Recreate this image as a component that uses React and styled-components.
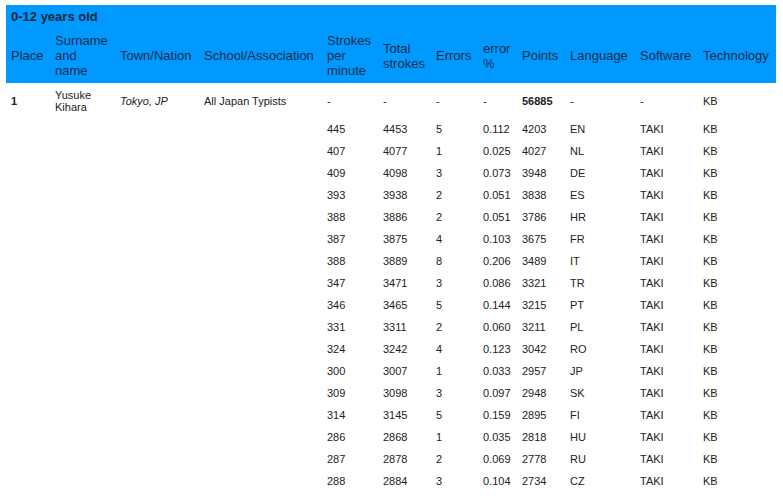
import React from "react";
import styled, { createGlobalStyle } from "styled-components";

const Global = createGlobalStyle`
  body { margin: 0; background: #fff; font-family: "Liberation Sans", Arial, sans-serif; }
`;
const Wrap = styled.div` padding: 5px 0 0 6px; `;
const Table = styled.table`
  width: 770px; border-collapse: collapse; table-layout: fixed;
`;
const Title = styled.th`
  background: #0099ff; color: #0d2740; font-size: 13px; font-weight: bold;
  text-align: left; padding: 4px 5px; line-height: 15px;
`;
const Head = styled.th`
  background: #0099ff; color: #0d2d4a; font-size: 13px; font-weight: normal;
  text-align: left; padding: 5px 5px; line-height: 15px; vertical-align: middle;
`;
const Cell = styled.td`
  font-size: 11px; color: #222; padding: 5px 5px; line-height: 12px;
  vertical-align: middle; font-weight: ${p => (p.$bold ? "bold" : "normal")};
  font-style: ${p => (p.$italic ? "italic" : "normal")};
`;
const FirstRow = styled.tr` td { padding-top: 6px; padding-bottom: 5px; } `;

const widths = [44, 65, 84, 123, 56, 53, 47, 39, 48, 70, 63, 78];
const heads = ["Place", "Surname and name", "Town/Nation", "School/Association", "Strokes per minute", "Total strokes", "Errors", "error %", "Points", "Language", "Software", "Technology"];
const data = [
  [445, 4453, 5, "0.112", 4203, "EN"], [407, 4077, 1, "0.025", 4027, "NL"],
  [409, 4098, 3, "0.073", 3948, "DE"], [393, 3938, 2, "0.051", 3838, "ES"],
  [388, 3886, 2, "0.051", 3786, "HR"], [387, 3875, 4, "0.103", 3675, "FR"],
  [388, 3889, 8, "0.206", 3489, "IT"], [347, 3471, 3, "0.086", 3321, "TR"],
  [346, 3465, 5, "0.144", 3215, "PT"], [331, 3311, 2, "0.060", 3211, "PL"],
  [324, 3242, 4, "0.123", 3042, "RO"], [300, 3007, 1, "0.033", 2957, "JP"],
  [309, 3098, 3, "0.097", 2948, "SK"], [314, 3145, 5, "0.159", 2895, "FI"],
  [286, 2868, 1, "0.035", 2818, "HU"], [287, 2878, 2, "0.069", 2778, "RU"],
  [288, 2884, 3, "0.104", 2734, "CZ"],
];

export default function App() {
  return (
    <Wrap>
      <Global />
      <Table>
        <colgroup>{widths.map((w, i) => <col key={i} style={{ width: w }} />)}</colgroup>
        <thead>
          <tr><Title colSpan={12}>0-12 years old</Title></tr>
          <tr>{heads.map(h => <Head key={h}>{h}</Head>)}</tr>
        </thead>
        <tbody>
          <FirstRow>
            <Cell $bold>1</Cell><Cell>Yusuke Kihara</Cell><Cell $italic>Tokyo, JP</Cell>
            <Cell>All Japan Typists</Cell><Cell>-</Cell><Cell>-</Cell><Cell>-</Cell><Cell>-</Cell>
            <Cell $bold>56885</Cell><Cell>-</Cell><Cell>-</Cell><Cell>KB</Cell>
          </FirstRow>
          {data.map((r, i) => (
            <tr key={i}>
              <Cell /><Cell /><Cell /><Cell />
              {r.map((v, j) => <Cell key={j}>{v}</Cell>)}
              <Cell>TAKI</Cell><Cell>KB</Cell>
            </tr>
          ))}
        </tbody>
      </Table>
    </Wrap>
  );
}
